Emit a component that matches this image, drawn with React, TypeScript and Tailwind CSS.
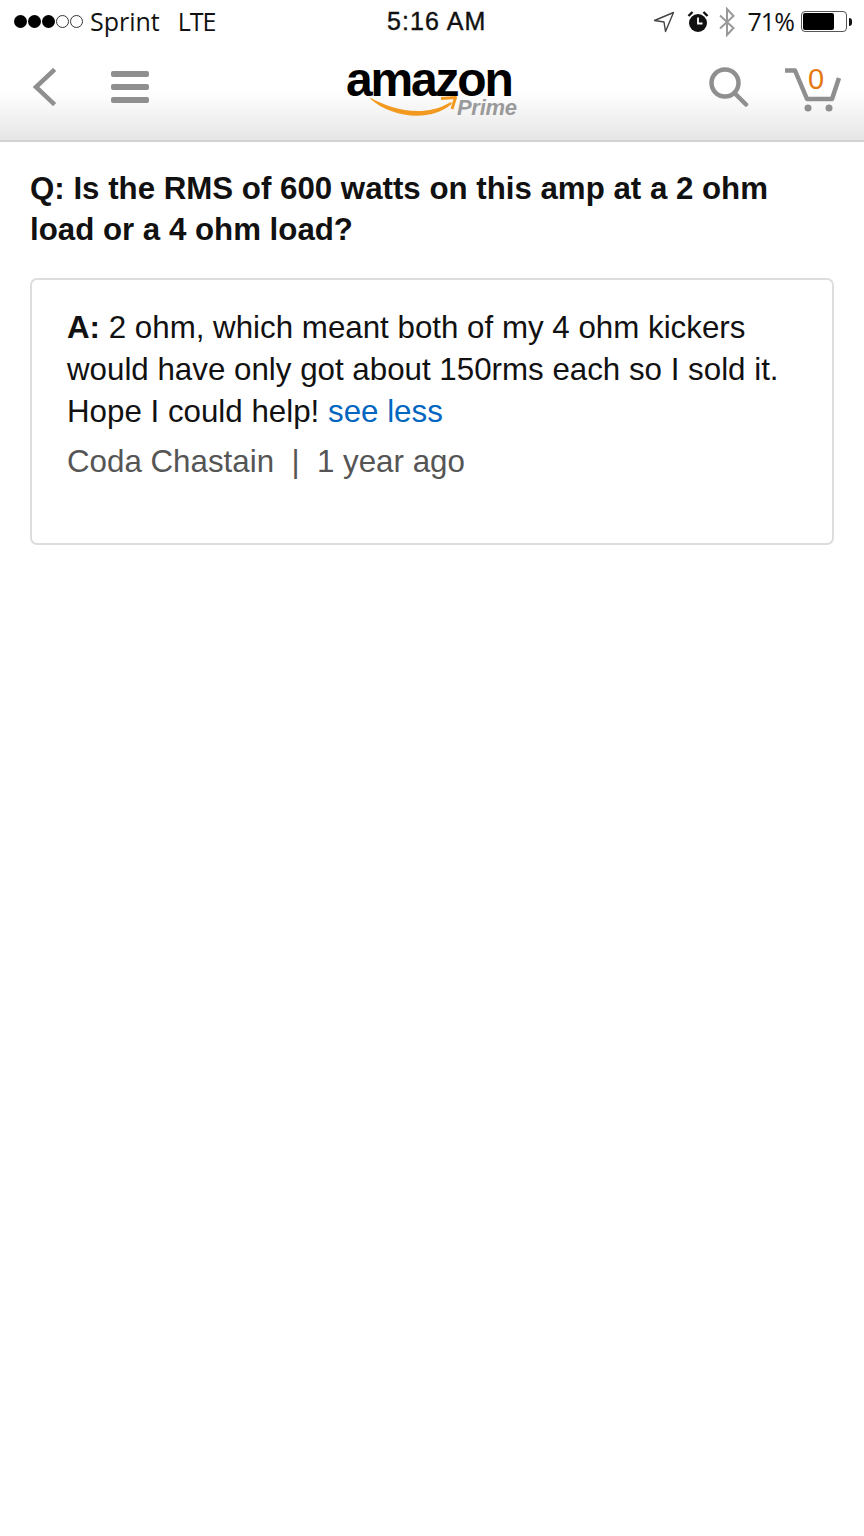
export default function App() {
  return (
    <div className="flex h-[1536px] w-[864px] flex-col bg-white font-['Liberation_Sans',Arial,sans-serif] text-[#111]">
      <div className="flex h-[42px] items-center justify-between bg-white pl-[14px] pr-[12px] pt-[1px] font-['Open_Sans','Liberation_Sans',sans-serif] text-[25px] text-[#111]">
        <div className="flex w-[300px] items-center">
          <div className="flex items-center gap-[1px]">
            {[1, 2, 3].map((i) => (
              <span key={i} className="h-[13px] w-[13px] rounded-full bg-black" />
            ))}
            {[4, 5].map((i) => (
              <span key={i} className="h-[13px] w-[13px] rounded-full border border-[#333]" />
            ))}
          </div>
          <span className="ml-[7px]">Sprint</span>
          <span className="ml-[18px] tracking-[-1px]">LTE</span>
        </div>
        <span className="ml-[73px] font-['Liberation_Sans',sans-serif] tracking-[1.1px] [-webkit-text-stroke:0.4px_#111]">5:16 AM</span>
        <div className="flex flex-1 items-center justify-end">
          <svg width="22" height="22" viewBox="0 0 22 22" fill="none" stroke="#444" strokeWidth="1.4" strokeLinejoin="round">
            <path d="M1.5 9.5 20.5 1.5 12.5 20.5 11 11Z" />
          </svg>
          <svg className="ml-[12px]" width="22" height="24" viewBox="0 0 22 24">
            <circle cx="11" cy="13" r="9" fill="#111" />
            <path d="M11 7.5V13.5H15.5" stroke="#fff" strokeWidth="1.8" fill="none" />
            <path d="M1.5 6 5.5 2M20.5 6 16.5 2" stroke="#111" strokeWidth="2.4" />
          </svg>
          <svg className="ml-[9px]" width="18" height="30" viewBox="0 0 18 30" fill="none" stroke="#999" strokeWidth="2">
            <path d="M2 8.5 15.5 21 9 28V2L15.5 9 2 21.5" />
          </svg>
          <span className="ml-[11px] tracking-[-0.9px]">71%</span>
          <div className="ml-[7px] flex h-[21px] w-[46px] rounded-[4px] border border-[#555] p-[1px]">
            <div className="h-full w-[31px] rounded-[2px] bg-black" />
          </div>
          <div className="ml-[2px] h-[8px] w-[3px] rounded-r-full bg-[#111]" />
        </div>
      </div>

      <header className="flex h-[100px] items-center border-b-2 border-[#d2d2d2] bg-gradient-to-b from-white from-50% to-[#e6e6e6] pb-[8px] pl-[32px] pr-[21px]">
        <svg width="26" height="38" viewBox="0 0 26 38" fill="none" stroke="#8f8f8f" strokeWidth="4.5" strokeLinecap="square">
          <path d="M21 3 4 19 21 35" />
        </svg>
        <div className="ml-[53px] flex w-[38px] flex-col gap-[7px]">
          <span className="h-[6px] rounded-[2px] bg-[#8f8f8f]" />
          <span className="h-[6px] rounded-[2px] bg-[#8f8f8f]" />
          <span className="h-[6px] rounded-[2px] bg-[#8f8f8f]" />
        </div>
        <div className="relative ml-[197px] h-[64px] w-[175px]">
          <span className="absolute left-0 top-[7px] text-[48px] font-bold leading-[35px] tracking-[-2.2px] text-black">amazon</span>
          <svg className="absolute left-[24px] top-[40px]" width="92" height="24" viewBox="0 0 92 24" fill="none">
            <path d="M1 3C22 15 54 23 80 7.5 81.5 6.5 82.5 8 81 9.5 60 27 22 23 .5 4 0 3 .5 2.5 1 3Z" fill="#f29a1f" />
            <path d="M71 3.5 85.5 2.5 82 14" stroke="#f29a1f" strokeWidth="3" fill="none" strokeLinejoin="round" />
          </svg>
          <span className="absolute left-[111px] top-[42px] text-[22px] font-bold italic leading-[22px] tracking-[-0.3px] text-[#9a9a9a]">Prime</span>
        </div>
        <div className="ml-auto flex items-center">
          <svg width="42" height="42" viewBox="0 0 42 42" fill="none" stroke="#8f8f8f" strokeWidth="4.5">
            <circle cx="18" cy="17" r="13.5" />
            <path d="M27.5 27 39 38.5" strokeLinecap="round" />
          </svg>
          <div className="relative ml-[34px] mt-[6px] h-[46px] w-[60px]">
            <svg width="60" height="46" viewBox="0 0 60 46" fill="none" stroke="#8f8f8f">
              <path d="M2 3.5H12L24 32H49L56 11" strokeWidth="4.5" strokeLinejoin="round" />
              <circle cx="25" cy="41" r="3.5" fill="#8f8f8f" stroke="none" />
              <circle cx="46" cy="41" r="3.5" fill="#8f8f8f" stroke="none" />
            </svg>
            <span className="absolute left-[25px] top-[-6px] text-[29px] font-medium leading-[36px] text-[#e47911]">0</span>
          </div>
        </div>
      </header>

      <main className="flex flex-col px-[30px] pt-[26px]">
        <h1 className="text-[31.25px] font-bold leading-[41px] text-[#111]">
          Q: Is the RMS of 600 watts on this amp at a 2 ohm
          <br />
          load or a 4 ohm load?
        </h1>
        <section className="mt-[28px] h-[267px] rounded-[7px] border-2 border-[#dddddd] pl-[35px] pt-[27px]">
          <p className="text-[31.3px] leading-[42px] text-[#111]">
            <b>A:</b> 2 ohm, which meant both of my 4 ohm kickers
            <br />
            would have only got about 150rms each so I sold it.
            <br />
            Hope I could help! <span className="text-[#0066c0]">see less</span>
          </p>
          <p className="mt-[8px] whitespace-pre text-[31.3px] leading-[42px] text-[#555]">Coda Chastain  |  1 year ago</p>
        </section>
      </main>
    </div>
  );
}
